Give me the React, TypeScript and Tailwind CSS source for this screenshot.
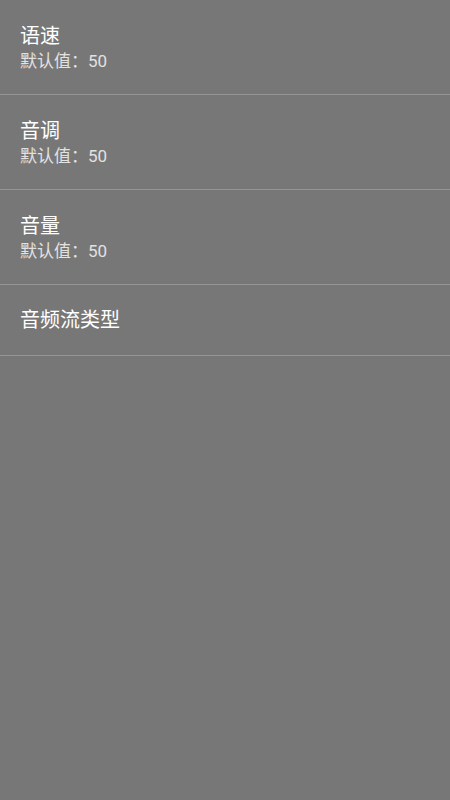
const items = [
  { title: "语速", summary: "默认值：50" },
  { title: "音调", summary: "默认值：50" },
  { title: "音量", summary: "默认值：50" },
  { title: "音频流类型" },
];

export default function App() {
  return (
    <div
      className="h-[800px] w-[450px] bg-[#777777]"
      style={{ fontFamily: 'Roboto, "Noto Sans CJK SC", sans-serif' }}
    >
      {items.map((item) => (
        <div
          key={item.title}
          className={`border-b border-[#959595] px-5 ${item.summary ? "pt-[23px] pb-[21px]" : "py-[22px]"}`}
        >
          <div className="text-[20px] leading-[26px] text-white">{item.title}</div>
          {item.summary && (
            <div className="text-[17px] leading-[24px] text-[#e2e2e2]">{item.summary}</div>
          )}
        </div>
      ))}
    </div>
  );
}
